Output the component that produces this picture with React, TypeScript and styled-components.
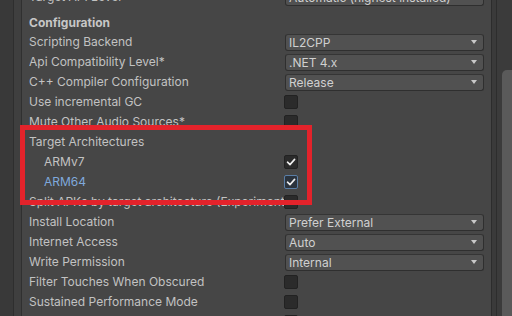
import styled, { createGlobalStyle } from "styled-components";

const GlobalStyle = createGlobalStyle`
  html, body {
    margin: 0;
    padding: 0;
    width: 512px;
    height: 316px;
    overflow: hidden;
    background: #464646;
  }
  * {
    box-sizing: border-box;
  }
`;

const Window = styled.div`
  display: flex;
  width: 512px;
  height: 316px;
  overflow: hidden;
  font-family: Inter, "Noto Sans", sans-serif;
  font-size: 12px;
  color: #c2c2c2;
`;

const Gutter = styled.div`
  display: flex;
  flex: 0 0 22px;
`;

const GutterOuter = styled.div`
  width: 14px;
  background: #393939;
  border-right: 1px solid #2e2e2e;
`;

const GutterInner = styled.div`
  width: 8px;
  background: #3f3f3f;
  border-right: 1px solid #303030;
`;

const Panel = styled.div`
  flex: 0 0 469px;
  display: flex;
  flex-direction: column;
  margin-top: -13px;
  background: #464646;
`;

const Row = styled.div`
  display: flex;
  align-items: center;
  height: 20px;
  flex: 0 0 20px;
  padding: 0 7px;
`;

const Label = styled.div<{ $indent?: boolean; $active?: boolean }>`
  flex: 0 0 255px;
  line-height: 20px;
  padding-left: ${(p) => (p.$indent ? "15px" : "0")};
  white-space: nowrap;
  overflow: hidden;
  color: ${(p) => (p.$active ? "#7fa9dc" : "#c2c2c2")};
`;

const Header = styled.div`
  flex: 0 0 25px;
  padding: 6px 7px 0;
  line-height: 19px;
  font-weight: 700;
  color: #c6c6c6;
`;

const Dropdown = styled.div`
  flex: 0 0 199px;
  margin-left: 1px;
  height: 17px;
  display: flex;
  align-items: center;
  justify-content: space-between;
  padding: 0 6px 0 3px;
  background: #515151;
  border: 1px solid #2f2f2f;
  border-top-color: #353535;
  border-radius: 3px;
  color: #d0d0d0;
  white-space: nowrap;
  overflow: hidden;
`;

const Arrow = styled.span`
  width: 0;
  height: 0;
  border-left: 3.5px solid transparent;
  border-right: 3.5px solid transparent;
  border-top: 4px solid #c8c8c8;
`;

const Box = styled.div<{ $focused?: boolean }>`
  width: 14px;
  height: 14px;
  display: flex;
  align-items: center;
  justify-content: center;
  border-radius: 2px;
  background: ${(p) => (p.$focused ? "#2b333d" : "#2b2b2b")};
  border: 1px solid ${(p) => (p.$focused ? "#5a7ea6" : "#222222")};
`;

const Group = styled.div`
  position: relative;
  display: flex;
  flex-direction: column;
`;

const Highlight = styled.div`
  position: absolute;
  left: -2px;
  top: -7px;
  width: 292px;
  height: 80px;
  border: 5px solid #e3232b;
  z-index: 2;
  pointer-events: none;
`;

const ScrollArea = styled.div`
  flex: 1;
  display: flex;
  border-left: 1px solid #2c2c2c;
`;

const Divider = styled.div`
  width: 5px;
  background: #3a3a3a;
  border-right: 1px solid #2d2d2d;
`;

const Track = styled.div`
  flex: 1;
  display: flex;
  justify-content: flex-end;
  background: #3b3b3b;
  padding-top: 70px;
`;

const Thumb = styled.div`
  width: 10px;
  height: 260px;
  background: #5a5a5a;
  border-radius: 5px 0 0 0;
`;

const Check = () => (
  <svg width="10" height="10" viewBox="0 0 10 10">
    <path
      d="M1.5 5.2 L4 7.6 L8.6 2.4"
      fill="none"
      stroke="#eeeeee"
      strokeWidth="1.6"
      strokeLinecap="round"
      strokeLinejoin="round"
    />
  </svg>
);

type Field =
  | { label: string; kind: "dropdown"; value: string }
  | { label: string; kind: "check"; checked?: boolean };

const before: Field[] = [
  { label: "Scripting Backend", kind: "dropdown", value: "IL2CPP" },
  { label: "Api Compatibility Level*", kind: "dropdown", value: ".NET 4.x" },
  { label: "C++ Compiler Configuration", kind: "dropdown", value: "Release" },
  { label: "Use incremental GC", kind: "check" },
  { label: "Mute Other Audio Sources*", kind: "check" },
];

const after: Field[] = [
  { label: "Split APKs by target architecture (Experimental)", kind: "check" },
  { label: "Install Location", kind: "dropdown", value: "Prefer External" },
  { label: "Internet Access", kind: "dropdown", value: "Auto" },
  { label: "Write Permission", kind: "dropdown", value: "Internal" },
  { label: "Filter Touches When Obscured", kind: "check" },
  { label: "Sustained Performance Mode", kind: "check" },
  { label: "Low Accuracy Location", kind: "check" },
];

const FieldRow = ({ field }: { field: Field }) => (
  <Row>
    <Label>{field.label}</Label>
    {field.kind === "dropdown" ? (
      <Dropdown>
        {field.value}
        <Arrow />
      </Dropdown>
    ) : (
      <Box>{field.checked && <Check />}</Box>
    )}
  </Row>
);

export default function App() {
  return (
    <>
      <GlobalStyle />
      <Window>
        <Gutter>
          <GutterOuter />
          <GutterInner />
        </Gutter>
        <Panel>
          <FieldRow
            field={{
              label: "Target API Level",
              kind: "dropdown",
              value: "Automatic (highest installed)",
            }}
          />
          <Header>Configuration</Header>
          {before.map((f) => (
            <FieldRow key={f.label} field={f} />
          ))}
          <Group>
            <Highlight />
            <Row>
              <Label>Target Architectures</Label>
            </Row>
            <Row>
              <Label $indent>ARMv7</Label>
              <Box>
                <Check />
              </Box>
            </Row>
            <Row>
              <Label $indent $active>
                ARM64
              </Label>
              <Box $focused>
                <Check />
              </Box>
            </Row>
          </Group>
          {after.map((f) => (
            <FieldRow key={f.label} field={f} />
          ))}
        </Panel>
        <ScrollArea>
          <Divider />
          <Track>
            <Thumb />
          </Track>
        </ScrollArea>
      </Window>
    </>
  );
}
